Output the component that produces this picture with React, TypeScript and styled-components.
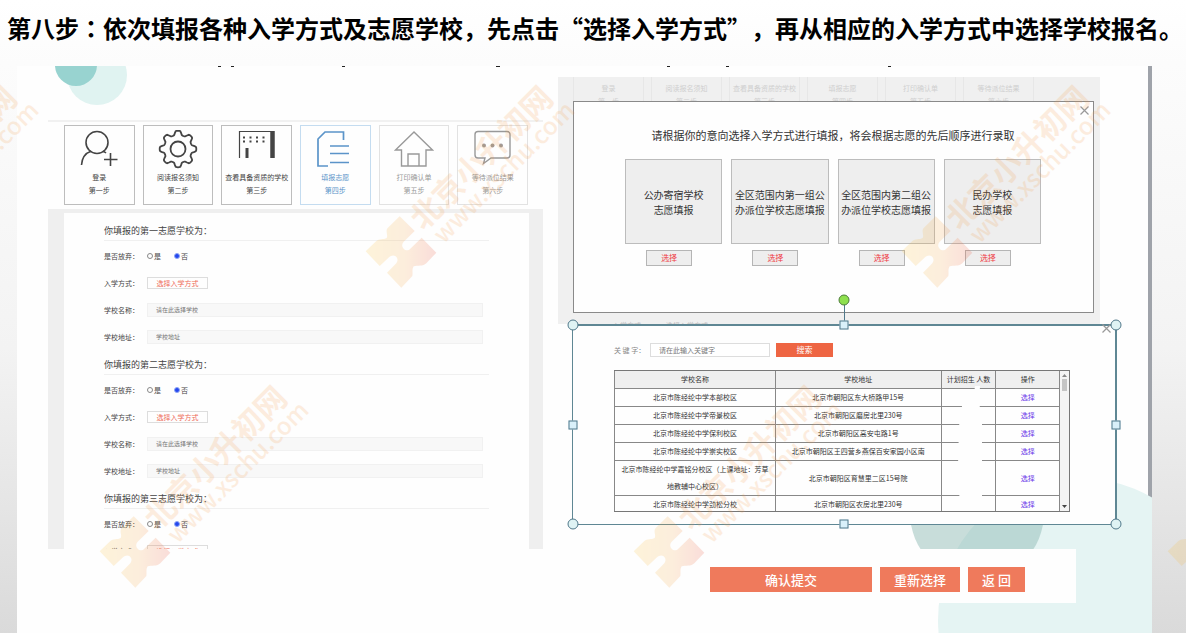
import React from 'react';
import styled, { createGlobalStyle, css } from 'styled-components';

const Global = createGlobalStyle`
  *, *::before, *::after { box-sizing: border-box; }
  html, body { margin: 0; padding: 0; }
  body {
    font-family: "Noto Sans CJK SC", "Noto Sans", sans-serif;
    color: #444;
    text-spacing-trim: space-all;
  }
  button, input { font-family: inherit; margin: 0; }
  h1, h2, h3, p { margin: 0; font-weight: 400; }
`;

const Page = styled.div`
  position: relative;
  min-height: 100vh;
  overflow: hidden;
  display: flex;
  flex-direction: column;
  background: linear-gradient(#fff 0%, #fcfcfc 10%, #f3f3f3 55%, #dadada 100%);
`;

const Title = styled.h1`
  padding: 10px 0 20px 7px;
  font-size: 24px;
  line-height: 36px;
  font-weight: 700;
  color: #000;
  white-space: nowrap;
`;

const CenteredMark = styled.span`
  font-family: "Noto Sans CJK JP", sans-serif;
`;

const Slide = styled.main`
  position: relative;
  flex: 1;
  margin: 0 34px 0 17px;
  padding: 0 35px 30px 31px;
  background: #fefefe;
  display: grid;
  grid-template-columns: 495fr 559fr;
  align-items: start;
  gap: 15px;
`;

const CornerTopLeft = styled.svg`
  position: absolute;
  top: 0;
  left: 0;
`;

const CornerBottomRight = styled.svg`
  position: absolute;
  right: 0;
  bottom: 0;
`;

const EdgeBar = styled.div`
  position: absolute;
  top: 0;
  right: 0;
  bottom: 134px;
  width: 4px;
  background: #9fa3aa;
`;

/* ---------- left: application form ---------- */

const FormColumn = styled.section`
  position: relative;
  margin-top: 54px;
  border-top: 2px solid #f1f1f1;
`;

const Steps = styled.ol`
  list-style: none;
  margin: 0;
  padding: 3px 15px 4px 16px;
  display: grid;
  grid-template-columns: repeat(6, 1fr);
  gap: 8px;
`;

type Tone = 'done' | 'active' | 'next';
const toneColor = { done: '#444', active: '#5b94c9', next: '#999' };
const toneBorder = { done: '#bdbdbd', active: '#c4dcf0', next: '#e2e2e2' };

const StepCard = styled.li<{ $tone: Tone }>`
  height: 80px;
  padding-top: 4px;
  border: 1px solid ${p => toneBorder[p.$tone]};
  color: ${p => toneColor[p.$tone]};
  display: flex;
  flex-direction: column;
  align-items: center;
  font-size: 7px;
  line-height: 13px;
  white-space: nowrap;

  svg { flex: none; margin-bottom: 1px; }
`;

const FormFrame = styled.div`
  height: 340px;
  overflow: hidden;
  padding: 4px 14px 0 16px;
  background: #efefef;
`;

const FormSheet = styled.form`
  min-height: 100%;
  padding: 4px 40px 0;
  background: #fefefe;
`;

const Choice = styled.fieldset`
  border: 0;
  margin: 0;
  padding: 0 0 1px;
  min-width: 0;
`;

const ChoiceTitle = styled.h2`
  height: 24px;
  margin-bottom: 1px;
  border-bottom: 1px solid #f0f0f0;
  font-size: 9px;
  line-height: 28px;
`;

const FieldRow = styled.div`
  height: 27px;
  display: flex;
  align-items: center;
  padding-right: 6px;
  font-size: 7px;
  line-height: 14px;
`;

const labelBox = css`
  flex: none;
  width: 43px;
`;

const FieldLabel = styled.label`${labelBox}`;
const FieldName = styled.span`${labelBox}`;

const Radio = styled.label`
  display: flex;
  align-items: center;
  gap: 1px;
  margin-right: 13px;

  input {
    appearance: none;
    width: 6px;
    height: 6px;
    border: 1px solid #888;
    border-radius: 50%;
    background: #fff;
  }
  input:checked {
    border-color: #8fa6f5;
    background: #2447ee;
  }
`;

const WayButton = styled.button`
  width: 61px;
  height: 12px;
  padding: 0;
  border: 1px solid #ddd;
  background: #fefefe;
  color: #ee6a58;
  font-size: 7px;
  line-height: 10px;
`;

const FieldInput = styled.input`
  flex: 1;
  min-width: 0;
  height: 14px;
  padding: 0 8px;
  border: 1px solid #f1f1f1;
  background: #f8f8f8;
  font-size: 6px;
  &::placeholder { color: #777; opacity: 1; }
`;

/* ---------- right: dialogs ---------- */

const DialogColumn = styled.section`
  position: relative;
  margin-top: 11px;
`;

const Backdrop = styled.div`
  margin-right: 17px;
  padding: 0 6px 0 15px;
  background: #f0f0f0;
`;

const FadedSteps = styled.div`
  height: 24px;
  overflow: hidden;
  display: grid;
  grid-template-columns: repeat(6, 71px);
  gap: 7px;
`;

const FadedStep = styled.div`
  padding-top: 5px;
  border: solid #e7e7e7;
  border-width: 0 1px;
  font-size: 7px;
  line-height: 13px;
  text-align: center;
  white-space: nowrap;
  color: #cfcfcf;
`;

const FadedRow = styled.div`
  height: 11px;
  overflow: hidden;
  display: flex;
  gap: 18px;
  padding: 5px 0 0 40px;
  font-size: 7px;
  line-height: 14px;
  color: #bbb;
`;

const Dialog = styled.div`
  position: relative;
  height: 212px;
  padding: 23px 52px 0 51px;
  border: 1px solid #8a8a8a;
  background: #fefefe;
`;

const DialogTitle = styled.h2`
  margin-bottom: 14px;
  font-size: 11px;
  line-height: 20px;
  text-align: center;
  white-space: nowrap;
  color: #333;
`;

const CloseButton = styled.button<{ $window?: boolean }>`
  position: absolute;
  top: ${p => (p.$window ? '-3px' : '3px')};
  right: 3px;
  width: 11px;
  height: 11px;
  padding: 0;
  border: 0;
  background: none;
  display: flex;
  color: #999;
`;

const Ways = styled.div`
  display: grid;
  grid-template-columns: repeat(4, 1fr);
  gap: 9px;
`;

const Way = styled.div`
  display: flex;
  flex-direction: column;
  align-items: center;
  gap: 6px;
`;

const WayCard = styled.p`
  width: 100%;
  height: 85px;
  border: 1px solid #bcbcbc;
  background: #eee;
  display: flex;
  align-items: center;
  justify-content: center;
  text-align: center;
  white-space: pre;
  font-size: 10px;
  line-height: 15px;
  color: #333;
`;

const PickButton = styled.button`
  width: 46px;
  height: 16px;
  margin-right: 9px;
  padding: 0;
  border: 1px solid #b5b5b5;
  background: #eee;
  color: #ee3a44;
  font-size: 8px;
  line-height: 14px;
`;

const Window = styled.div`
  position: relative;
  margin: 0 0 0 14px;
  border: solid #5f8794;
  border-width: 2px 2px 1px 1px;
  padding: 17px 45px 12px 41px;
  background: #fefefe;
`;

const SearchRow = styled.form`
  display: flex;
  align-items: center;
  margin-bottom: 13px;
  font-size: 8px;
  line-height: 14px;

  label { width: 36px; font-size: 7px; color: #888; white-space: pre; }
`;

const SearchInput = styled.input`
  width: 120px;
  height: 14px;
  padding: 0 8px;
  border: 1px solid #ddd;
  background: #fff;
  font-size: 7px;
  &::placeholder { color: #777; opacity: 1; }
`;

const SearchButton = styled.button`
  width: 57px;
  height: 14px;
  margin-left: 6px;
  padding: 0;
  border: 0;
  background: #ee6543;
  color: #fff;
  font-size: 8px;
  line-height: 14px;
`;

const TableFrame = styled.div`
  position: relative;
  display: flex;
  align-items: flex-start;
  height: 142px;
  overflow: hidden;
  border: solid #777;
  border-width: 1px 1px 1px 0;
`;

const SchoolTable = styled.table`
  flex: 1;
  table-layout: fixed;
  border-collapse: collapse;
  margin-top: -1px;
  font-size: 7px;
  line-height: 17px;
  text-align: center;
  color: #333;

  th, td {
    height: 18px;
    padding: 0;
    border: 1px solid #888;
    font-weight: 400;
    white-space: nowrap;
  }
  th { background: #efefef; }
  a { color: #6a35e8; text-decoration: none; }
`;

const Eraser = styled.svg`
  position: absolute;
  top: 15px;
  left: 341px;
`;

const ScrollTrack = styled.div`
  flex: none;
  align-self: stretch;
  width: 9px;
  background: #f4f4f4;
  display: flex;
  flex-direction: column;
  align-items: center;
  justify-content: space-between;
  padding: 3px 0;
`;

const ScrollThumb = styled.div`
  width: 5px;
  height: 12px;
  margin: 2px 0 auto;
  background: #c4c4c4;
`;

const Handle = styled.span<{ $x: string; $y: string; $kind: 'corner' | 'side' | 'rotate' }>`
  position: absolute;
  left: ${p => p.$x};
  top: ${p => p.$y};
  transform: translate(-50%, -50%);
  border: 1px solid #50788a;
  ${p =>
    p.$kind === 'side'
      ? css`width: 9px; height: 9px; background: #d9f0fa;`
      : css`width: 11px; height: 11px; border-radius: 50%; background: #dff3f4;`}
  ${p => p.$kind === 'rotate' && css`background: #8ee04e; border-color: #4d7d3a;`}
`;

const RotateStem = styled.span`
  position: absolute;
  left: 50%;
  top: -24px;
  width: 1px;
  height: 24px;
  background: #50788a;
`;

const Actions = styled.div`
  margin: 24px 41px 0 13px;
  height: 54px;
  padding-right: 51px;
  background: #fefefe;
  display: flex;
  align-items: center;
  justify-content: flex-end;
  gap: 8px;
  position: relative;
`;

const ActionButton = styled.button<{ $width: number }>`
  width: ${p => p.$width}px;
  height: 25px;
  margin-top: 6px;
  padding: 0;
  border: 0;
  background: #ef7a5c;
  color: #fff;
  font-size: 13px;
  line-height: 25px;
  font-weight: 500;
`;

const MarkLayer = styled.div`
  position: absolute;
  inset: 0;
  overflow: hidden;
  pointer-events: none;
`;

const Mark = styled.svg<{ $x: number; $y: number }>`
  position: absolute;
  left: ${p => p.$x}px;
  top: ${p => p.$y}px;
  overflow: visible;
  opacity: 0.17;
  font-family: "Noto Sans CJK SC", sans-serif;
  font-weight: 700;
`;

/* ---------- icons ---------- */

const iconProps = { width: 40, height: 40, fill: 'none', stroke: 'currentColor', viewBox: '0 0 40 40' };

const gearPath = (() => {
  const pts: string[] = [];
  for (let i = 0; i <= 96; i++) {
    const a = (i / 96) * Math.PI * 2;
    const r = 16.2 + 2.2 * Math.tanh(2 * Math.cos(8 * a));
    pts.push(`${(20 + r * Math.sin(a)).toFixed(2)} ${(19 - r * Math.cos(a)).toFixed(2)}`);
  }
  return 'M' + pts.join('L') + 'Z';
})();

const UserPlus = () => (
  <svg {...iconProps} strokeWidth={1.6}>
    <circle cx="18" cy="12.500" r="11" />
    <path d="M2.500 35C3 28 6.500 23 12 21.200M24 21.200c1.200.5 2.300 1.100 3 1.800M31.500 23v13M25 29.500h13.500" />
  </svg>
);
const Gear = () => (
  <svg {...iconProps} strokeWidth={1.8}>
    <path d={gearPath} />
    <circle cx="20" cy="19" r="7.500" />
  </svg>
);
const Building = () => (
  <svg {...iconProps} strokeWidth={1.2}>
    <path d="M2.500 28V1.500H37" />
    <path d="M35.500 1v27" strokeWidth={4.5} />
    <path d="M10 18v10" strokeWidth={3} />
    <path d="M6 7.500h22M6 11.500h22" strokeWidth={2} strokeDasharray="2 4.500" />
  </svg>
);
const Doc = () => (
  <svg {...iconProps} strokeWidth={1.7}>
    <path d="M28.500 10V2H10L3 9v27h10M15 16h19M15 23.500h19M15 32.500h19" />
  </svg>
);
const House = () => (
  <svg {...iconProps} strokeWidth={1.4}>
    <path d="M20 2L1.500 20H7.500V36H32V20h6.500zM14 36V24h11v12" />
  </svg>
);
const Chat = () => (
  <svg {...iconProps} strokeWidth={1.4}>
    <path d="M5 1.500h29a3 3 0 0 1 3 3V25a3 3 0 0 1-3 3H18l-7.500 5.500 1.500-5.500H5a3 3 0 0 1-3-3V4.500a3 3 0 0 1 3-3z" />
    <g fill="currentColor" stroke="none">
      <circle cx="11" cy="15.500" r="2" /><circle cx="19.500" cy="15.500" r="2" /><circle cx="28" cy="15.500" r="2" />
    </g>
  </svg>
);
const Cross = () => (
  <svg width="11" height="11" viewBox="0 0 11 11" stroke="currentColor" strokeWidth="1.200">
    <path d="M1.500 1.500l8 8M9.500 1.500l-8 8" />
  </svg>
);

const Watermark = ({ x, y }: { x: number; y: number }) => (
  <Mark $x={x} $y={y} width="1" height="1" aria-hidden="true">
    <defs>
      <linearGradient id="puzzle" x1="0" y1="0" x2="1" y2="0">
        <stop offset="0" stopColor="#fbc02d" />
        <stop offset="0.550" stopColor="#f6a23c" />
        <stop offset="1" stopColor="#e8402a" />
      </linearGradient>
    </defs>
    <path
      fill="url(#puzzle)"
      transform="scale(.333)"
      d="M-4-107L41-63 8-31C2-24 2-16 8-10 14-4 22-4 28-10L62-43 106 2 76 34C66 44 50 40 38 43 32 52 36 62 34 72L1 107-42 62-14 34C-8 26-10 18-16 13-22 8-30 10-36 16L-64 42-106-2-74-33C-66-41-52-36-43-42-38-50-48-62-40-72Z"
    />
    <g fill="#f39a45" dominantBaseline="central">
      <text transform="translate(13 -30) rotate(-45)" fontSize="31">北京小升初网</text>
      <text transform="translate(35 -15) rotate(-45)" fontSize="24" fontWeight="500">www.xschu.com</text>
    </g>
  </Mark>
);

/* ---------- data ---------- */

const steps: { label: string; no: string; tone: Tone; Icon: React.FC }[] = [
  { label: '登录', no: '第一步', tone: 'done', Icon: UserPlus },
  { label: '阅读报名须知', no: '第二步', tone: 'done', Icon: Gear },
  { label: '查看具备资质的学校', no: '第三步', tone: 'done', Icon: Building },
  { label: '填报志愿', no: '第四步', tone: 'active', Icon: Doc },
  { label: '打印确认单', no: '第五步', tone: 'next', Icon: House },
  { label: '等待派位结果', no: '第六步', tone: 'next', Icon: Chat },
];

const ways = [
  '公办寄宿学校\n志愿填报',
  '全区范围内第一组公\n办派位学校志愿填报',
  '全区范围内第二组公\n办派位学校志愿填报',
  '民办学校\n志愿填报',
];

const schools = [
  ['北京市陈经纶中学本部校区', '北京市朝阳区东大桥路甲15号'],
  ['北京市陈经纶中学帝景校区', '北京市朝阳区磨房北里230号'],
  ['北京市陈经纶中学保利校区', '北京市朝阳区高安屯路1号'],
  ['北京市陈经纶中学崇实校区', '北京市朝阳区王四营乡燕保百安家园小区南'],
  ['北京市陈经纶中学嘉铭分校区（上课地址：芳草\n地教辅中心校区）', '北京市朝阳区育慧里二区15号院'],
  ['北京市陈经纶中学劲松分校', '北京市朝阳区农房北里230号'],
];

const marks = [[-135, 252], [401, 252], [937, 252], [135, 552], [669, 552], [1203, 552]];

const ChoiceGroup = ({ n, index, full }: { n: string; index: number; full: boolean }) => (
  <Choice>
    <ChoiceTitle>你填报的第{n}志愿学校为：</ChoiceTitle>
    <FieldRow>
      <FieldName>是否放弃：</FieldName>
      <Radio><input type="radio" name={`waive${index}`} />是</Radio>
      <Radio><input type="radio" name={`waive${index}`} defaultChecked />否</Radio>
    </FieldRow>
    <FieldRow>
      <FieldLabel htmlFor={`way${index}`}>入学方式：</FieldLabel>
      <WayButton type="button" id={`way${index}`}>选择入学方式</WayButton>
    </FieldRow>
    {full && (
      <>
        <FieldRow>
          <FieldLabel htmlFor={`name${index}`}>学校名称：</FieldLabel>
          <FieldInput id={`name${index}`} placeholder="请在此选择学校" />
        </FieldRow>
        <FieldRow>
          <FieldLabel htmlFor={`addr${index}`}>学校地址：</FieldLabel>
          <FieldInput id={`addr${index}`} placeholder="学校地址" />
        </FieldRow>
      </>
    )}
  </Choice>
);

export default function App() {
  return (
    <Page lang="zh-CN">
      <Global />
      <Title>
        第八步<CenteredMark lang="ja">：</CenteredMark>依次填报各种入学方式及志愿学校，先点击“选择入学方式”，再从相应的入学方式中选择学校报名。
      </Title>
      <Slide>
        <EdgeBar />
        <CornerTopLeft width="900" height="42" aria-hidden="true">
          <circle cx="80" cy="9" r="30" fill="#e0f3f1" />
          <circle cx="59" cy="-1" r="21" fill="#98d3d0" />
          <path d="M201 .5h3M214 .5h3M325 .5h3M479 .5h4M650 .5h3M709 .5h3M871 .5h3" stroke="#222" />
        </CornerTopLeft>
        <CornerBottomRight width="242" height="190" aria-hidden="true">
          <circle cx="170" cy="177" r="142" fill="#e5f4f3" />
          <circle cx="67" cy="70" r="67" fill="#8fb9b3" opacity="0.480" />
        </CornerBottomRight>

        <FormColumn>
          <Steps>
            {steps.map(({ label, no, tone, Icon }) => (
              <StepCard key={no} $tone={tone}>
                <Icon />
                <span>{label}</span>
                <span>{no}</span>
              </StepCard>
            ))}
          </Steps>
          <FormFrame>
            <FormSheet>
              {['一', '二', '三'].map((n, i) => <ChoiceGroup key={n} n={n} index={i} full={i < 2} />)}
            </FormSheet>
          </FormFrame>
        </FormColumn>

        <DialogColumn>
          <Backdrop>
            <FadedSteps>
              {steps.map(s => <FadedStep key={s.no}>{s.label}<br />{s.no}</FadedStep>)}
            </FadedSteps>
            <Dialog>
              <CloseButton aria-label="关闭"><Cross /></CloseButton>
              <DialogTitle>请根据你的意向选择入学方式进行填报，将会根据志愿的先后顺序进行录取</DialogTitle>
              <Ways>
                {ways.map(w => (
                  <Way key={w}>
                    <WayCard>{w}</WayCard>
                    <PickButton>选择</PickButton>
                  </Way>
                ))}
              </Ways>
            </Dialog>
            <FadedRow><span>入学方式：</span><span>选择入学方式</span></FadedRow>
          </Backdrop>

          <Window>
            <CloseButton $window aria-label="关闭"><Cross /></CloseButton>
            <SearchRow>
              <label htmlFor="keyword">关 键 字：</label>
              <SearchInput id="keyword" placeholder="请在此输入关键字" />
              <SearchButton type="button">搜索</SearchButton>
            </SearchRow>
            <TableFrame>
              <SchoolTable>
                <colgroup>
                  <col width="161" />
                  <col width="166" />
                  <col width="55" />
                  <col width="64" />
                </colgroup>
                <thead>
                  <tr><th>学校名称</th><th>学校地址</th><th>计划招生 人数</th><th>操作</th></tr>
                </thead>
                <tbody>
                  {schools.map(([name, addr]) => (
                    <tr key={name}>
                      <td>{name.split('\n').map((t, i) => <React.Fragment key={t}>{i > 0 && <br />}{t}</React.Fragment>)}</td>
                      <td>{addr}</td>
                      <td />
                      <td><a href="#pick">选择</a></td>
                    </tr>
                  ))}
                </tbody>
              </SchoolTable>
              <Eraser width="36" height="126" aria-hidden="true">
                <path fill="#fefefe" d="M20 0h5l-1 18 3 10V124H5L3 80 4 40 7 20 18 16z" />
              </Eraser>
              <ScrollTrack>
                <svg width="5" height="3"><path d="M0 3L2.500 0 5 3z" fill="#888" /></svg>
                <ScrollThumb />
                <svg width="5" height="3"><path d="M0 0L2.500 3 5 0z" fill="#444" /></svg>
              </ScrollTrack>
            </TableFrame>
            <RotateStem />
            <Handle $kind="rotate" $x="50%" $y="-26px" />
            <Handle $kind="corner" $x="0" $y="-1px" />
            <Handle $kind="corner" $x="calc(100% + 1px)" $y="-1px" />
            <Handle $kind="corner" $x="0" $y="100%" />
            <Handle $kind="corner" $x="calc(100% + 1px)" $y="100%" />
            <Handle $kind="side" $x="50%" $y="-1px" />
            <Handle $kind="side" $x="50%" $y="100%" />
            <Handle $kind="side" $x="0" $y="50%" />
            <Handle $kind="side" $x="calc(100% + 1px)" $y="50%" />
          </Window>

          <Actions>
            <ActionButton $width={162}>确认提交</ActionButton>
            <ActionButton $width={80}>重新选择</ActionButton>
            <ActionButton $width={57}>返 回</ActionButton>
          </Actions>
        </DialogColumn>
      </Slide>
      <MarkLayer>
        {marks.map(([x, y]) => <Watermark key={x} x={x} y={y} />)}
      </MarkLayer>
    </Page>
  );
}
